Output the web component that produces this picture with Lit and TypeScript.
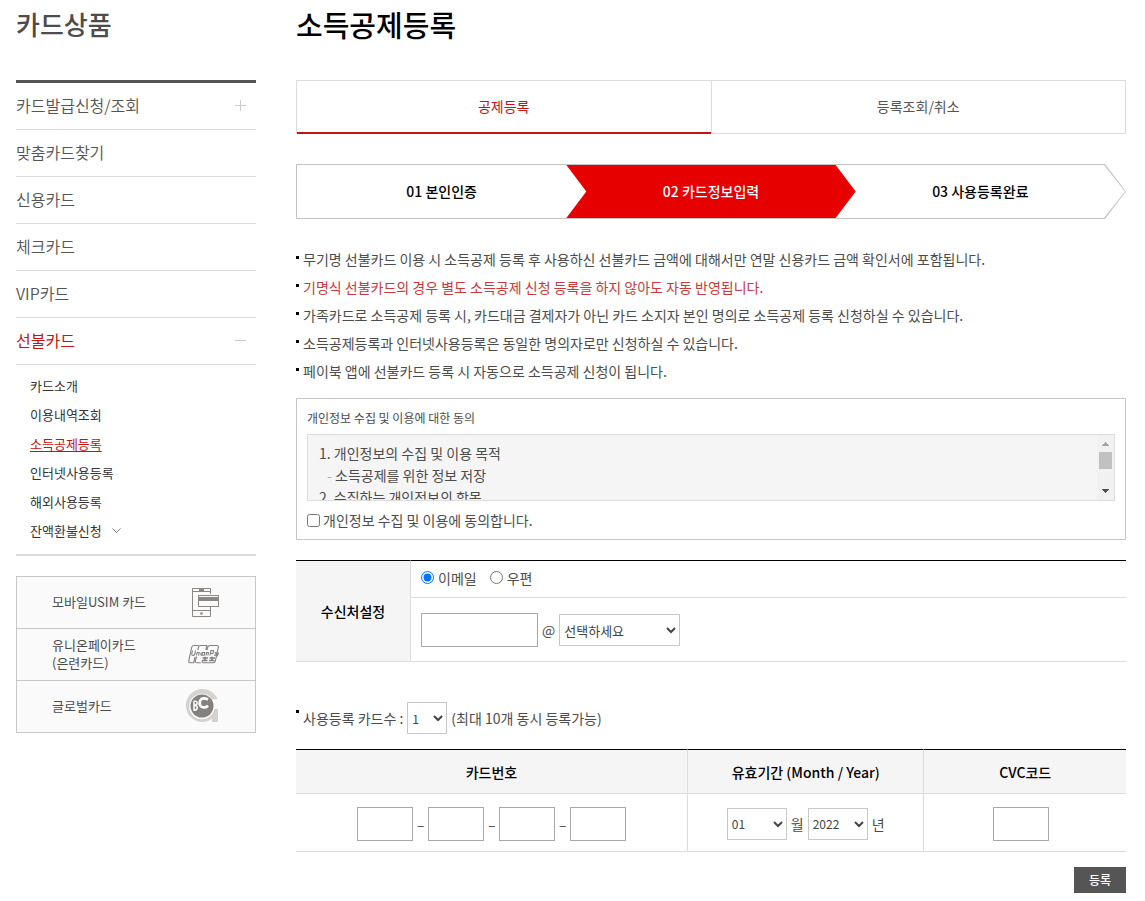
import { LitElement, html, svg, css, nothing } from "lit";
import { customElement, state } from "lit/decorators.js";
import { classMap } from "lit/directives/class-map.js";

const menu = [
  { label: "카드발급신청/조회", mark: "plus" },
  { label: "맞춤카드찾기" },
  { label: "신용카드" },
  { label: "체크카드" },
  { label: "VIP카드" },
  { label: "선불카드", mark: "minus", active: true },
];

const submenu = [
  { label: "카드소개" },
  { label: "이용내역조회" },
  { label: "소득공제등록", active: true },
  { label: "인터넷사용등록" },
  { label: "해외사용등록" },
  { label: "잔액환불신청", more: true },
];

const notices = [
  { text: "무기명 선불카드 이용 시 소득공제 등록 후 사용하신 선불카드 금액에 대해서만 연말 신용카드 금액 확인서에 포함됩니다." },
  { text: "기명식 선불카드의 경우 별도 소득공제 신청 등록을 하지 않아도 자동 반영됩니다.", strong: true },
  { text: "가족카드로 소득공제 등록 시, 카드대금 결제자가 아닌 카드 소지자 본인 명의로 소득공제 등록 신청하실 수 있습니다." },
  { text: "소득공제등록과 인터넷사용등록은 동일한 명의자로만 신청하실 수 있습니다." },
  { text: "페이북 앱에 선불카드 등록 시 자동으로 소득공제 신청이 됩니다." },
];

const phoneIcon = html`<svg width="34" height="34" viewBox="-3 0 34 34" fill="none" stroke="#8c8784" aria-hidden="true">
  <path d="M22.500 9V3.500h-18v28h18V21" />
  <path d="M4.500 6.500h18M4.500 25.500h18" />
  <path d="M11 5h5" stroke-width="2" />
  <rect x="10.500" y="10.500" width="20" height="11" fill="#fafafa" />
  <path d="M11 14h19" stroke-width="4" />
  <circle cx="13.500" cy="28.500" r="1.300" fill="#8c8784" stroke="none" />
</svg>`;

const unionIcon = html`<svg width="34" height="34" viewBox="-3 0 34 34" fill="none" stroke="#858080" stroke-width="1.100" aria-hidden="true">
  <path d="M10.500 8.500H6q-1.800 0-2.300 1.800L.8 23.500q-.4 2.200 1.500 2.200h3.400L7 20M9.800 13l.8-3q.4-1.500 2-1.500h6.200L17.800 13M19 13l.8-3q.4-1.500 2-1.500h7q2 0 1.500 2l-2.900 13.300q-.4 1.900-2.300 1.900H15.500q-1.700 0-1.300-1.700M8.500 19.500l-1.100 4.400q-.3 1.800 1.400 1.800h4" />
  <path d="M4.500 13.500l-.8 3.500q0 1.500 1.300 1.500t1.800-1.500l.8-3.500M8.500 18.500l.7-3h2l-.6 3M13 15.500v3M14.500 15.500h2.200l-.4 2.700h-2.200zM18 18.500l.6-3h1.800l-.5 3M22 18.500l1-5h2.500l-.6 3h-2.200M26.500 15.800h1.600l-.5 2.500h-1.600M29 15.500l.4 2.800 1.600-2.800" />
  <path d="M14.500 21h5.500M14 23.500h5.500M17 19.700v4.600M21.500 21h5.500M21 23.500h5.500M24 19.700v4.600" stroke-width="1.700" />
</svg>`;

const globalIcon = html`<svg width="34" height="34" viewBox="0 0 34 34" fill="none" aria-hidden="true">
  <path d="M32.500 10A16.500 16.500 0 1 0 26 30.500l1-2V33h6V20h-3.500A12.800 12.800 0 1 1 25 7.500l2 3z" fill="#d3d2d1" />
  <circle cx="17" cy="17" r="11.500" fill="#84807e" />
  <path d="M23 10.500q-6-3-8 1.500-1.500 5.500 3.500 6.500 2.700 0 4.500-1.800" stroke="#fff" stroke-width="2.700" />
  <path d="M9 12v9.500M8.500 12.500q3.800-1 3.600 1.700-.2 2-3 2.200 3.600-.1 3.100 2.600-.4 2.200-3.500 2.300" stroke="#fff" stroke-width="1.500" />
</svg>`;

const banners = [
  { lines: ["모바일USIM 카드"], icon: phoneIcon },
  { lines: ["유니온페이카드", "(은련카드)"], icon: unionIcon },
  { lines: ["글로벌카드"], icon: globalIcon },
];

@customElement("app-root")
export class AppRoot extends LitElement {
  @state() private channel = "email";

  static styles = css`
    :host {
      display: block;
      background: #fff;
      color: #4c4c4c;
      font: 14px/28px "Noto Sans CJK KR", sans-serif;
    }
    * { box-sizing: border-box; }
    ul, ol, h1, h2, p { margin: 0; padding: 0; list-style: none; }
    a { color: inherit; text-decoration: none; }
    .page { display: flex; gap: 40px; padding: 0 19px 8px 16px; }
    .side { flex: 0 0 240px; }
    .main { flex: 1; min-width: 0; }
    .side-title, .title { height: 80px; line-height: 48px; font-weight: 500; }
    .side-title { font-size: 26px; }
    .title { font-size: 29px; color: #000; }

    .menu { border-top: 3px solid #555; }
    .menu-link {
      display: flex; align-items: center; justify-content: space-between;
      height: 47px; padding: 0 10px 2px 0; border-bottom: 1px solid #dcdcdc;
      font-size: 16px; font-weight: 350; color: #555;
    }
    .menu-link.active { color: #c51212; font-weight: 400; }
    .sub { padding: 6px 0 9px 14px; border-bottom: 2px solid #dcdcdc; }
    .sub-link { display: flex; align-items: center; gap: 10px; font-size: 13px; line-height: 29px; color: #333; }
    .sub-link.active .sub-text { color: #c51212; text-decoration: underline; text-underline-offset: 2px; }
    .banners { margin-top: 20px; border: 1px solid #c8c8c8; background: #fafafa; }
    .banner {
      display: flex; align-items: center; justify-content: space-between;
      height: 51px; padding: 0 36px 2px 35px; font-size: 13px; line-height: 18px;
    }
    .banner-row + .banner-row { border-top: 1px solid #c8c8c8; }
    .banner-line { display: block; }

    .tabs { display: flex; border: 1px solid #dcdcdc; }
    .tab { flex: 1; height: 52px; line-height: 50px; text-align: center; color: #555; }
    .tab + .tab { border-left: 1px solid #dcdcdc; }
    .tab.active { color: #c51212; height: 53px; margin-bottom: -1px; border-bottom: 2px solid #c51212; }

    .steps-frame, .steps {
      clip-path: polygon(0 0, calc(100% - 21px) 0, 100% 50%, calc(100% - 21px) 100%, 0 100%);
    }
    .steps-frame { margin-top: 30px; padding: 1px; background: #c4c4c4; }
    .steps { display: flex; background: #fff; }
    .step { flex: 1; height: 53px; line-height: 52px; text-align: center; color: #000; font-weight: 500; }
    .step + .step { margin-left: -20px; }
    .step.active {
      background: #e60000; color: #fff;
      clip-path: polygon(0 0, calc(100% - 20px) 0, 100% 50%, calc(100% - 20px) 100%, 0 100%, 20px 50%);
    }

    .notices { margin-top: 26px; }
    .notice, .count { display: flex; }
    .notice::before, .count::before {
      content: ""; flex: none; width: 3px; height: 3px; margin: 11px 4px 0 0; background: #000;
    }
    .notice.strong { color: #c9383d; }

    .agree { margin-top: 13px; padding: 5px 10px; border: 1px solid #c8c8c8; }
    .agree-title { font-size: 12px; line-height: 28px; font-weight: 400; }
    .terms {
      height: 67px; margin-top: 2px; border: 1px solid #dcdcdc; background: #f5f5f5;
      display: flex;
    }
    .terms-text { flex: 1; overflow: hidden; padding: 7px 11px; line-height: 22px; }
    .terms-sub { padding-left: 8px; }
    .terms-sub::before { content: "-"; display: inline-block; width: 8px; color: #aaa; }
    .scroll {
      flex: 0 0 17px; display: flex; flex-direction: column; background: #f1f1f1;
    }
    .thumb { height: 17px; margin: 0 2px; background: #c1c1c1; }
    .scroll .down { margin-top: auto; }
    .check { display: flex; align-items: center; gap: 3px; margin-top: 5px; line-height: 28px; }
    input[type="checkbox"], input[type="radio"] { width: 13px; height: 13px; margin: 0; flex: none; }

    table { width: 100%; border-collapse: separate; border-spacing: 0; table-layout: fixed; border-bottom: 1px solid #dcdcdc; }
    th, td { padding: 0; font-weight: 400; }
    th { background: #f5f5f5; color: #000; font-weight: 500; }
    .receive { margin-top: 20px; }
    .receive th { width: 115px; border-top: 1px solid #000; border-right: 1px solid #dcdcdc; }
    .receive td { padding-left: 10px; }
    .receive .radios { height: 37px; padding-bottom: 3px; border-top: 1px solid #000; }
    .radio-list { display: flex; gap: 13px; }
    .radio { display: flex; align-items: center; gap: 4px; }
    .mail { height: 64px; border-top: 1px solid #dcdcdc; }
    .receive .mail { padding-top: 1px; }
    .fields { display: flex; align-items: center; gap: 4px; }
    .fields.center { justify-content: center; }
    .dash { width: 7px; text-align: center; }
    .box { width: 56px; height: 34px; padding: 0 6px; border: 1px solid #a9a9a9; border-radius: 0; background: #fff; font: inherit; }
    .box.wide { width: 117px; }
    select {
      width: 60px; height: 32px; padding: 0; border: 1px solid #c8c8c8; border-radius: 0; background: #fff;
      color: #444; font: 12px/20px "Noto Sans CJK KR", sans-serif;
    }
    .select-mail { width: 121px; font-size: 13px; }
    .select-count { width: 40px; }
    .count { margin-top: 40px; }
    .count::before { margin-top: 8px; }
    .cards { margin-top: 15px; }
    .cards th { height: 45px; border-top: 1px solid #000; border-bottom: 1px solid #dcdcdc; }
    .cards td { height: 57px; padding-top: 2px; }
    .cards th + th, .cards td + td { border-left: 1px solid #dcdcdc; }
    .cards td:last-child { padding-right: 8px; }
    .col-number { width: 47.1%; }
    .col-date { width: 28.5%; }
    .actions { display: flex; justify-content: flex-end; margin-top: 15px; }
    .submit {
      width: 52px; height: 26px; padding: 0; border: 0; background: #555; color: #fff;
      font: 500 12px/24px "Noto Sans CJK KR", sans-serif;
    }
  `;

  private mark(kind?: string) {
    if (!kind) return nothing;
    return html`<svg width="11" height="11" viewBox="0 0 11 11" stroke="#ccc" aria-hidden="true">
      <path d="M0 5.500h11" />${kind === "plus" ? svg`<path d="M5.500 0v11" />` : nothing}
    </svg>`;
  }

  private sidebar() {
    return html`<aside class="side">
      <h2 class="side-title">카드상품</h2>
      <nav>
        <ul class="menu">
          ${menu.map((m) => html`<li>
            <a href="#" class=${classMap({ "menu-link": true, active: !!m.active })}>${m.label}${this.mark(m.mark)}</a>
          </li>`)}
        </ul>
        <ul class="sub">
          ${submenu.map((s) => html`<li>
            <a href="#" class=${classMap({ "sub-link": true, active: !!s.active })}><span class="sub-text">${s.label}</span>${s.more
              ? html`<svg width="9" height="6" viewBox="0 0 9 6" fill="none" stroke="#777" aria-hidden="true"><path d="M.5.500l4 4 4-4" /></svg>`
              : nothing}</a>
          </li>`)}
        </ul>
      </nav>
      <ul class="banners">
        ${banners.map((b) => html`<li class="banner-row"><a href="#" class="banner">
          <span>${b.lines.map((l) => html`<span class="banner-line">${l}</span>`)}</span>${b.icon}
        </a></li>`)}
      </ul>
    </aside>`;
  }

  private terms() {
    return html`<section class="agree">
      <h2 class="agree-title">개인정보 수집 및 이용에 대한 동의</h2>
      <div class="terms">
        <div class="terms-text" tabindex="0">
          <p>1. 개인정보의 수집 및 이용 목적</p>
          <p class="terms-sub">소득공제를 위한 정보 저장</p>
          <p>2. 수집하는 개인정보의 항목</p>
        </div>
        <div class="scroll" aria-hidden="true">
          <svg width="17" height="17" viewBox="0 0 17 17" shape-rendering="crispEdges"><path d="M5 11h7L8.500 7z" fill="#a3a3a3" /></svg>
          <div class="thumb"></div>
          <svg class="down" width="17" height="17" viewBox="0 0 17 17" shape-rendering="crispEdges"><path d="M5 6h7l-3.500 4z" fill="#505050" /></svg>
        </div>
      </div>
      <label class="check"><input type="checkbox" />개인정보 수집 및 이용에 동의합니다.</label>
    </section>`;
  }

  private receive() {
    const pick = (value: string, label: string) => html`<label class="radio">
      <input type="radio" name="channel" .checked=${this.channel === value} @change=${() => (this.channel = value)} />${label}
    </label>`;
    return html`<table class="receive">
      <tr>
        <th scope="row" rowspan="2">수신처설정</th>
        <td class="radios"><div class="radio-list">${pick("email", "이메일")}${pick("post", "우편")}</div></td>
      </tr>
      <tr>
        <td class="mail"><div class="fields">
          <input class="box wide" type="text" aria-label="이메일 아이디" />
          <span>@</span>
          <select class="select-mail" aria-label="이메일 도메인"><option>선택하세요</option></select>
        </div></td>
      </tr>
    </table>`;
  }

  private cards() {
    return html`<table class="cards">
      <colgroup><col class="col-number" /><col class="col-date" /><col /></colgroup>
      <thead><tr>
        <th scope="col">카드번호</th><th scope="col">유효기간 (Month / Year)</th><th scope="col">CVC코드</th>
      </tr></thead>
      <tbody><tr>
        <td><div class="fields center">
          ${[1, 2, 3, 4].map((n) => html`${n > 1 ? html`<span class="dash">–</span>` : nothing}<input class="box" type="text" maxlength="4" aria-label="카드번호 ${n}" />`)}
        </div></td>
        <td><div class="fields center">
          <select aria-label="월"><option>01</option></select><span>월</span>
          <select aria-label="년"><option>2022</option></select><span>년</span>
        </div></td>
        <td><div class="fields center"><input class="box" type="text" maxlength="3" aria-label="CVC코드" /></div></td>
      </tr></tbody>
    </table>`;
  }

  render() {
    return html`<div class="page">
      ${this.sidebar()}
      <main class="main">
        <h1 class="title">소득공제등록</h1>
        <nav class="tabs"><a href="#" class="tab active">공제등록</a><a href="#" class="tab">등록조회/취소</a></nav>
        <div class="steps-frame"><ol class="steps">
          <li class="step">01 본인인증</li>
          <li class="step active">02 카드정보입력</li>
          <li class="step">03 사용등록완료</li>
        </ol></div>
        <ul class="notices">
          ${notices.map((n) => html`<li class=${classMap({ notice: true, strong: !!n.strong })}>${n.text}</li>`)}
        </ul>
        ${this.terms()}
        ${this.receive()}
        <div class="count"><div class="fields">
          <label for="count">사용등록 카드수 :</label>
          <select id="count" class="select-count"><option>1</option></select>
          <span>(최대 10개 동시 등록가능)</span>
        </div></div>
        ${this.cards()}
        <div class="actions"><button class="submit" type="button">등록</button></div>
      </main>
    </div>`;
  }
}
